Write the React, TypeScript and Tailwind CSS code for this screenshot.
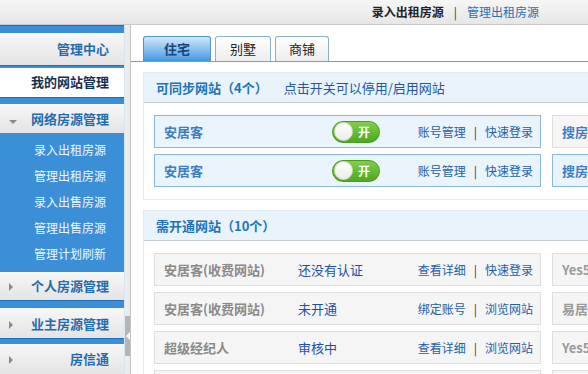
import React from "react"

const font = { fontFamily: '"Noto Sans CJK SC", "Noto Sans", sans-serif' }

const Arrow = ({ down }: { down?: boolean }) =>
  down ? (
    <span className="inline-block h-0 w-0 border-x-[4px] border-t-[4px] border-x-transparent border-t-[#8a8a8a]" />
  ) : (
    <span className="inline-block h-0 w-0 border-y-[4px] border-l-[4px] border-y-transparent border-l-[#8a8a8a]" />
  )

const SideHead = ({ label, arrow, h }: { label: string; arrow?: "down" | "right"; h: string }) => (
  <div
    className={`flex items-center justify-between bg-gradient-to-b from-[#f7f7f7] to-[#e4e4e4] pl-[9px] pr-[15px] text-[13px] font-bold text-[#1f6cb0] ${h}`}
  >
    <span>{arrow && <Arrow down={arrow === "down"} />}</span>
    <span>{label}</span>
  </div>
)

const Strip = ({ h }: { h: string }) => <div className={`border-t border-[#1c6fb8] bg-[#3a8fd6] ${h}`} />

const Sidebar = () => (
  <div className="flex w-[124px] shrink-0 flex-col bg-[#3a8fd6]">
    <Strip h="h-[8px]" />
    <SideHead label="管理中心" h="h-[32px]" />
    <Strip h="h-[3px]" />
    <div className="flex h-[29px] items-center justify-end bg-white pr-[15px] text-[13px] font-bold text-[#16304f]">
      我的网站管理
    </div>
    <Strip h="h-[7px]" />
    <SideHead label="网络房源管理" arrow="down" h="h-[30px]" />
    <div className="flex h-[139px] flex-col pt-[4px] pr-[18px] text-right text-[12px] text-[#eef6ff]">
      {["录入出租房源", "管理出租房源", "录入出售房源", "管理出售房源", "管理计划刷新"].map((s) => (
        <div key={s} className="flex h-[26px] items-center justify-end">
          {s}
        </div>
      ))}
    </div>
    <SideHead label="个人房源管理" arrow="right" h="h-[29px]" />
    <Strip h="h-[8px]" />
    <SideHead label="业主房源管理" arrow="right" h="h-[30px]" />
    <Strip h="h-[6px]" />
    <SideHead label="房信通" arrow="right" h="h-[30px]" />
  </div>
)

const Toggle = () => (
  <div className="flex h-[22px] w-[48px] items-center justify-between rounded-full border border-[#4c9a1e] bg-gradient-to-b from-[#7fd047] to-[#4fa81f] pl-[1px] pr-[9px]">
    <span className="h-[19px] w-[19px] rounded-full border border-[#cfe3c0] bg-gradient-to-b from-white to-[#ececec]" />
    <span className="text-[12px] font-bold text-white">开</span>
  </div>
)

const Links = ({ a, b }: { a: string; b: string }) => (
  <div className="flex items-center text-[12px] text-[#2560a8]">
    <span>{a}</span>
    <span className="mx-[8px] text-[#333]">|</span>
    <span>{b}</span>
  </div>
)

const SyncRow = ({ side, sideTone }: { side: string; sideTone: "blue" | "warm" }) => (
  <div className="flex gap-[11px]">
    <div className="flex h-[33px] w-[387px] shrink-0 items-center border border-[#88b6e6] bg-[#eaf4fd] pl-[9px] pr-[7px]">
      <span className="w-[168px] text-[13px] font-bold text-[#3c7ec6]">安居客</span>
      <Toggle />
      <div className="ml-auto">
        <Links a="账号管理" b="快速登录" />
      </div>
    </div>
    <div
      className={`flex h-[33px] w-[387px] shrink-0 items-center border pl-[9px] text-[13px] font-bold text-[#3c7ec6] ${
        sideTone === "blue" ? "border-[#88b6e6] bg-[#eaf4fd]" : "border-[#e2ddd8] bg-[#f8f6f4]"
      }`}
    >
      {side}
    </div>
  </div>
)

type OpenProps = { name?: string; status?: string; a?: string; b?: string; side?: string }

const OpenRow = ({ name, status, a, b, side }: OpenProps) => (
  <div className="flex gap-[11px]">
    <div className="flex h-[33px] w-[387px] shrink-0 items-center border border-[#dedede] bg-[#f5f5f5] pl-[9px] pr-[7px]">
      <span className="w-[134px] text-[13px] font-bold text-[#8a8a8a]">{name}</span>
      <span className="text-[13px] text-[#1f4fa8]">{status}</span>
      {a && b && (
        <div className="ml-auto">
          <Links a={a} b={b} />
        </div>
      )}
    </div>
    <div className="flex h-[33px] w-[387px] shrink-0 items-center border border-[#dedede] bg-[#f5f5f5] pl-[9px] text-[13px] font-bold text-[#9a9a9a]">
      {side}
    </div>
  </div>
)

const Section = ({ title, note, children }: { title: string; note?: string; children: React.ReactNode }) => (
  <div className="w-[800px] border border-[#e3eaf0] bg-white">
    <div className="flex h-[30px] items-center border-b border-[#c5ccd3] bg-[#e8f3fc] pl-[12px] text-[13px]">
      <span className="font-bold text-[#2174b9]">{title}</span>
      {note && <span className="ml-[16px] text-[#2455a8]">{note}</span>}
    </div>
    <div className="flex flex-col gap-[6px] px-[10px] pt-[12px] pb-[12px]">{children}</div>
  </div>
)

const Tab = ({ label, active, w }: { label: string; active?: boolean; w: string }) => (
  <div
    className={`flex h-[25px] items-center justify-center rounded-t-[3px] border border-b-0 text-[13px] ${w} ${
      active
        ? "border-[#4b93d2] bg-gradient-to-b from-[#cfe8fb] to-[#3f9ae0] font-bold text-[#17467e]"
        : "border-[#8db0cf] bg-gradient-to-b from-white to-[#ededed] text-[#222]"
    }`}
  >
    {label}
  </div>
)

export default function App() {
  return (
    <div className="flex h-[374px] w-[588px] flex-col overflow-hidden bg-white" style={font}>
      <div className="flex h-[25px] shrink-0 items-center justify-end border-b border-[#c9c9c9] bg-gradient-to-b from-[#f6f6f6] to-[#e6e6e6] pr-[49px] text-[12px]">
        <span className="font-bold text-[#222]">录入出租房源</span>
        <span className="mx-[10px] text-[#333]">|</span>
        <span className="text-[#2a70b0]">管理出租房源</span>
      </div>
      <div className="flex min-h-0 flex-1">
        <Sidebar />
        <div className="flex w-[7px] shrink-0 flex-col border-l border-[#d8e6f2] border-r border-r-[#c4c4c4] bg-[#ececec]">
          <div className="mt-[291px] flex h-[40px] items-center justify-center bg-[#b5b5b5]">
            <span className="h-0 w-0 border-y-[4px] border-r-[4px] border-y-transparent border-r-white" />
          </div>
        </div>
        <div className="flex min-w-0 flex-1 flex-col overflow-hidden">
          <div className="flex h-[37px] shrink-0 items-end gap-[4px] border-b border-[#5aa6e2] pl-[12px]">
            <Tab label="住宅" active w="w-[68px]" />
            <Tab label="别墅" w="w-[56px]" />
            <Tab label="商铺" w="w-[54px]" />
          </div>
          <div className="flex flex-col gap-[10px] pt-[10px] pl-[12px]">
            <Section title="可同步网站（4个）" note="点击开关可以停用/启用网站">
              <SyncRow side="搜房" sideTone="warm" />
              <SyncRow side="搜房" sideTone="blue" />
            </Section>
            <Section title="需开通网站（10个）">
              <OpenRow name="安居客(收费网站)" status="还没有认证" a="查看详细" b="快速登录" side="Yes5" />
              <OpenRow name="安居客(收费网站)" status="未开通" a="绑定账号" b="浏览网站" side="易居" />
              <OpenRow name="超级经纪人" status="审核中" a="查看详细" b="浏览网站" side="Yes5" />
              <OpenRow />
            </Section>
          </div>
        </div>
      </div>
    </div>
  )
}
